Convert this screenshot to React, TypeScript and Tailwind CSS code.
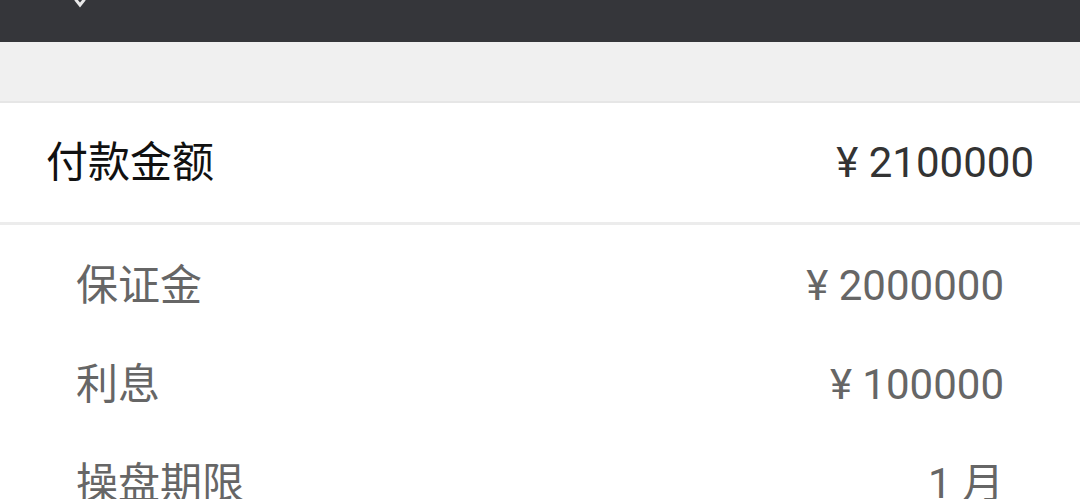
import React from 'react';

const font = { fontFamily: 'Roboto, "Noto Sans CJK SC", sans-serif' };

const details = [
  { label: '保证金', value: '¥ 2000000' },
  { label: '利息', value: '¥ 100000' },
  { label: '操盘期限', value: '1 月' },
];

const App: React.FC = () => {
  return (
    <div className="w-[1080px] h-[499px] overflow-hidden bg-white" style={font}>
      <div className="h-[42px] bg-[#35363a] overflow-hidden">
        <svg width="16" height="8" viewBox="0 0 16 8" className="ml-[72px]">
          <path d="M4 0 L8 5 L12 0" stroke="#e8e8e8" strokeWidth="3" fill="none" strokeLinecap="round" />
        </svg>
      </div>
      <div className="h-[61px] bg-[#f0f0f0] border-b-2 border-[#e6e6e6]" />
      <div className="h-[122px] flex items-center justify-between px-[46px] border-b-[3px] border-[#ececec]">
        <span className="text-[42px] text-[#111]">付款金额</span>
        <span className="text-[42px] text-[#333]">¥ 2100000</span>
      </div>
      <div className="flex flex-col pt-[11px]">
        {details.map((d) => (
          <div key={d.label} className="h-[99px] flex items-center justify-between px-[76px]">
            <span className="text-[42px] text-[#666]">{d.label}</span>
            <span className="text-[42px] text-[#666]">{d.value}</span>
          </div>
        ))}
      </div>
    </div>
  );
};

export default App;
